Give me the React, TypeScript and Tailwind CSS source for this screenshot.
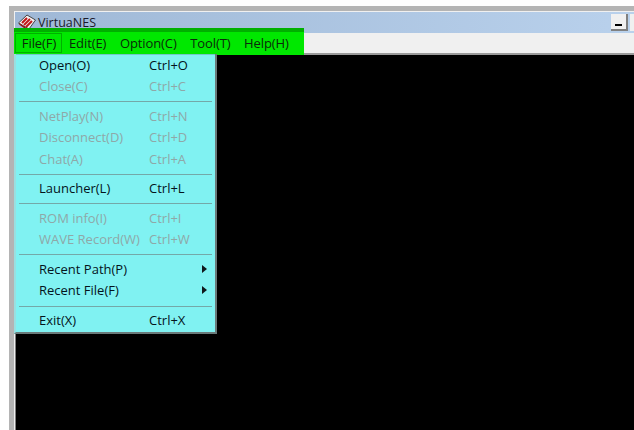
const font = "font-['Open_Sans','Noto_Sans',sans-serif]";

type Item =
  | { sep: true }
  | { label: string; key?: string; off?: boolean; sub?: boolean; sep?: false };

const items: Item[] = [
  { label: "Open(O)", key: "Ctrl+O" },
  { label: "Close(C)", key: "Ctrl+C", off: true },
  { sep: true },
  { label: "NetPlay(N)", key: "Ctrl+N", off: true },
  { label: "Disconnect(D)", key: "Ctrl+D", off: true },
  { label: "Chat(A)", key: "Ctrl+A", off: true },
  { sep: true },
  { label: "Launcher(L)", key: "Ctrl+L" },
  { sep: true },
  { label: "ROM info(I)", key: "Ctrl+I", off: true },
  { label: "WAVE Record(W)", key: "Ctrl+W", off: true },
  { sep: true },
  { label: "Recent Path(P)", sub: true },
  { label: "Recent File(F)", sub: true },
  { sep: true },
  { label: "Exit(X)", key: "Ctrl+X" },
];

const menus = ["Edit(E)", "Option(C)", "Tool(T)", "Help(H)"];

function AppIcon() {
  return (
    <svg width="18" height="20" viewBox="0 0 18 20" className="shrink-0">
      <path d="M0.5 9 L9 1 L17.5 6 L11 15 Z" fill="#f4f0f0" stroke="#444" strokeWidth="1" />
      <path d="M4 9 L9 4 M6 11 L12 5 M8 13 L14 7" stroke="#c01818" strokeWidth="2" />
      <path d="M1.5 10 L10 16" stroke="#a01010" strokeWidth="1.5" />
      <rect x="9" y="16" width="8" height="4" fill="#222" />
      <rect x="11" y="17" width="4" height="2" fill="#ccc" />
    </svg>
  );
}

export default function App() {
  return (
    <div className={`relative h-[430px] w-[634px] overflow-hidden bg-white pt-[6px] ${font}`}>
      <div className="ml-[9px] flex h-[424px] flex-col bg-[#b4b4b4] pl-[5px] pt-[5px]">
        <div className="flex h-full flex-col border-l border-t border-[#f0f0f0] bg-[#f0f0f0]">
          <div className="flex h-[21px] items-start bg-gradient-to-r from-[#9fb8d6] to-[#b9d1ec] pl-[3px] pt-[2px]">
            <AppIcon />
            <span className="ml-[2px] text-[12.5px] leading-[18px] text-[#1a1a2a]">VirtuaNES</span>
            <div className="ml-auto mr-[2px] flex h-[17px] w-[17px] items-end justify-center border-b-2 border-r-2 border-[#808080] bg-[#f0f0f0] pb-[3px]">
              <div className="h-[2px] w-[7px] bg-black" />
            </div>
            <div className="h-[17px] w-[4px] bg-[#f0f0f0]" />
          </div>
          <div className="h-[22px] border-b-2 border-[#9a9a9a] bg-[#f0f0f0]" />
          <div className="flex-1 border-l border-[#808080] bg-black" />
        </div>
      </div>

      <div className="absolute left-[14px] top-[28px] flex h-[27px] w-[290px] flex-col bg-[#00e800]">
        <div className="h-[4px] bg-[#00b000]" />
        <div className="flex items-start pl-[1px] pt-[1px] text-[13px] tracking-[-0.1px] text-[#0a2a0a]">
          <div className="flex h-[20px] w-[47px] items-center justify-center border border-[#00b000] pl-[1px] pt-px">File(F)</div>
          <div className="flex h-[20px] items-center gap-[13.6px] pl-[7px] pt-px">
            {menus.map((m) => (
              <span key={m}>{m}</span>
            ))}
          </div>
        </div>
      </div>

      <div className="absolute left-[14px] top-[54px] w-[203px] border-b-2 border-l-2 border-r-2 border-b-[#6a7a7a] border-l-[#9adfe0] border-r-[#6a7a7a] bg-[#80f2f2] pt-px shadow-[inset_0_1px_0_#70c8c8]">
        {items.map((it, i) =>
          it.sep ? (
            <div key={i} className="flex h-[8.4px] items-center px-[3px]">
              <div className="h-px w-full bg-[#74a8a8]" />
            </div>
          ) : (
            <div key={i} className={`flex h-[21.33px] items-center pl-[23px] text-[13px] ${it.off ? "text-[#8fa8a8]" : "text-[#04141c]"}`}>
              <span className="w-[110px] whitespace-nowrap">{it.label}</span>
              {it.key && <span className="whitespace-nowrap">{it.key}</span>}
              {it.sub && (
                <svg width="5" height="8" viewBox="0 0 5 8" className="ml-[53px] -mt-[2px]">
                  <path d="M0 0 L5 4 L0 8 Z" fill="#10181c" />
                </svg>
              )}
            </div>
          )
        )}
      </div>
    </div>
  );
}
